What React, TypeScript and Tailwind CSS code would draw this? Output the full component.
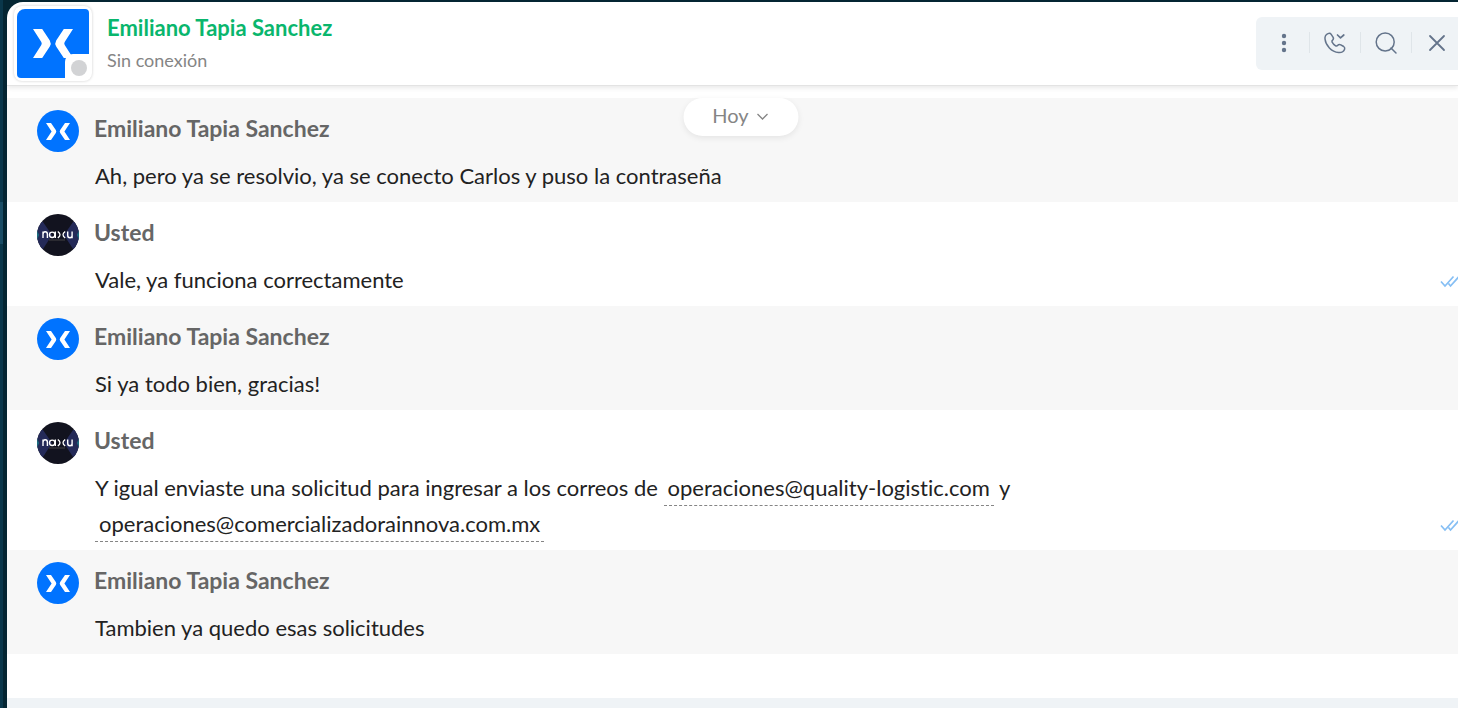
import type { ReactNode } from "react";

type Message = { id: number; author: string; own: boolean; read?: boolean; body: ReactNode };

function MailLink({ address }: { address: string }) {
  return (
    <a
      href={`mailto:${address}`}
      className="inline-block border-b border-dashed border-[#858585] px-1 pb-px leading-8"
    >
      {address}
    </a>
  );
}

const messages: Message[] = [
  {
    id: 1,
    author: "Emiliano Tapia Sanchez",
    own: false,
    body: "Ah, pero ya se resolvio, ya se conecto Carlos y puso la contraseña",
  },
  { id: 2, author: "Usted", own: true, read: true, body: "Vale, ya funciona correctamente" },
  { id: 3, author: "Emiliano Tapia Sanchez", own: false, body: "Si ya todo bien, gracias!" },
  {
    id: 4,
    author: "Usted",
    own: true,
    read: true,
    body: (
      <>
        Y igual enviaste una solicitud para ingresar a los correos de{" "}
        <MailLink address="operaciones@quality-logistic.com" /> y
        <br />
        <MailLink address="operaciones@comercializadorainnova.com.mx" />
      </>
    ),
  },
  { id: 5, author: "Emiliano Tapia Sanchez", own: false, body: "Tambien ya quedo esas solicitudes" },
];

function ContactMark() {
  return (
    <svg viewBox="0 0 40 29" className="h-[29px] w-10" fill="#fff" aria-hidden="true">
      <path d="M0 0H9.2L16.8 11.5Q18.6 14.5 16.8 17.5L9.2 29H0L8.3 16Q9.2 14.5 8.3 13Z" />
      <path d="M40 0H30.8L23.2 11.5Q21.4 14.5 23.2 17.5L30.8 29H40L31.7 16Q30.8 14.5 31.7 13Z" />
    </svg>
  );
}

function SmallContactMark() {
  return (
    <svg viewBox="0 0 24 17" className="h-[17px] w-6" fill="#fff" aria-hidden="true">
      <path d="M0 0H5L9.8 7Q10.8 8.5 9.8 10L5 17H0L5.6 8.5Z" />
      <path d="M24 0H19L14.2 7Q13.2 8.5 14.2 10L19 17H24L18.4 8.5Z" />
    </svg>
  );
}

function Avatar({ own }: { own: boolean }) {
  if (own) {
    return (
      <svg viewBox="0 0 42 42" className="size-[42px] shrink-0 rounded-full" role="img" aria-label="Usted">
        <rect width="42" height="42" fill="#12131f" />
        <path d="M0 8L6 8L15 21L6 35L0 35Z" fill="#242a58" />
        <path d="M42 8L36 8L27 21L36 35L42 35Z" fill="#242a58" />
        <path d="M0 16L2 21L0 26Z" fill="#1c7182" />
        <path d="M42 16L40 21L42 26Z" fill="#1c7182" />
        <g fill="none" stroke="#fff" strokeWidth="1.4">
          <path d="M6 24V17.5M6 20.3Q6 17.7 8.2 17.7T10.4 20.3V24" />
          <circle cx="15.2" cy="20.8" r="2.7" />
          <path d="M18.3 17.5V24" />
          <path d="M20.8 17.5Q25.2 20.8 20.8 24M28.2 17.5Q23.8 20.8 28.2 24" strokeWidth="1.3" />
          <path d="M30.7 17.5V21.2Q30.7 23.7 32.9 23.7T35.1 21.2M35.1 17.5V24.3" />
        </g>
        <path d="M12 26H28" stroke="#77736b" strokeWidth="0.5" />
      </svg>
    );
  }
  return (
    <span className="flex size-[42px] shrink-0 items-center justify-center rounded-full bg-[#0073ff]">
      <SmallContactMark />
    </span>
  );
}

function ReadMark() {
  return (
    <svg
      viewBox="0 0 22 13"
      className="-mr-1 h-[13px] w-[22px] shrink-0"
      fill="none"
      stroke="#86bff4"
      strokeWidth="1.7"
      role="img"
      aria-label="Leído"
    >
      <path d="M1 6.5L5 11L13.5 1.5M8.5 8.5L10.5 11L19 1.5" />
    </svg>
  );
}

const actions: { label: string; icon: ReactNode }[] = [
  {
    label: "Más opciones",
    icon: (
      <g fill="#64748b" stroke="none">
        <circle cx="12" cy="5" r="2.2" />
        <circle cx="12" cy="12" r="2.2" />
        <circle cx="12" cy="19" r="2.2" />
      </g>
    ),
  },
  {
    label: "Llamar",
    icon: (
      <>
        <path d="M5 2.6C3 3.5 1.7 5.4 2 8C2.7 14.5 8.5 20.8 15.5 21.5C18.3 21.8 20.8 20.2 21.6 18.2C22 17.2 21.6 16.2 20.7 15.5L17.8 13.8C16.7 13.2 15.6 13.4 14.8 14.3C14.1 15.1 13.2 15.2 12.3 14.6C10.9 13.7 9.8 12.5 9.1 11.2C8.7 10.3 8.9 9.6 9.6 9.1C10.6 8.3 10.7 7.3 10 6.2L8.2 3.4C7.5 2.3 6.2 2.1 5 2.6Z" />
        <path d="M14.5 4L17.5 6.8L20.8 4" strokeWidth="1.7" />
      </>
    ),
  },
  {
    label: "Buscar",
    icon: (
      <>
        <circle cx="11.2" cy="11" r="9" />
        <path d="M17 17L22 22" />
      </>
    ),
  },
  { label: "Cerrar", icon: <path d="M4 5L18 19M18 5L4 19" strokeWidth="1.8" /> },
];

export default function App() {
  return (
    <div className="flex min-h-screen overflow-hidden bg-[#042532] font-['Lato',sans-serif] [font-variant-ligatures:none]">
      <aside className="w-[7px] shrink-0 border-r-4 border-[#042532] bg-[#0a374b] pt-[202px]">
        <div className="h-[42px] bg-[#194c65]" />
      </aside>

      <main className="mt-[2px] flex min-w-0 flex-1 flex-col overflow-hidden rounded-tl-2xl bg-white">
        <header className="relative z-10 flex items-center justify-between border-b border-[#e3e3e3] py-1 shadow-[0_2px_5px_rgba(0,0,0,0.09)]">
          <div className="flex items-center">
            <div className="relative ml-[7px] h-[75px] w-[78px] rounded-lg bg-white p-[3px] shadow-[0_0_3px_rgba(0,0,0,0.2)]">
              <div className="flex h-full items-center justify-center rounded rounded-tl-lg bg-[#0073ff]">
                <ContactMark />
              </div>
              <span className="absolute right-[3px] bottom-[3px] flex size-6 items-center justify-center rounded-tl-lg bg-white pt-1 pl-1">
                <span className="size-4 rounded-full bg-[#d2d3d5]" />
              </span>
            </div>
            <div className="ml-[15px]">
              <h1 className="text-[22px] leading-8 font-bold text-[#09b66d]">Emiliano Tapia Sanchez</h1>
              <p className="text-lg leading-8 text-[#858585]">Sin conexión</p>
            </div>
          </div>
          <nav className="-mr-[6px] flex rounded-md bg-[#eff3f6] pt-[15px] pr-px pb-[17px] pl-[3px]" aria-label="Acciones del chat">
            {actions.map((action, index) => (
              <button
                key={action.label}
                type="button"
                aria-label={action.label}
                className={`flex h-[21px] w-[51px] items-center justify-center ${
                  index < actions.length - 1 ? "border-r border-[#dfe5e9]" : ""
                }`}
              >
                <svg
                  viewBox="0 0 24 24"
                  className="size-6 shrink-0"
                  fill="none"
                  stroke="#64748b"
                  strokeWidth="1.5"
                  strokeLinecap="round"
                  strokeLinejoin="round"
                  aria-hidden="true"
                >
                  {action.icon}
                </svg>
              </button>
            ))}
          </nav>
        </header>

        <section className="relative flex-1 pt-3" aria-label="Mensajes">
          <button
            type="button"
            className="absolute top-3 left-1/2 z-10 ml-2 flex h-[38px] w-[115px] -translate-x-1/2 items-center justify-center gap-2 rounded-full bg-white pb-1 text-xl text-[#858585] shadow-[0_2px_6px_rgba(0,0,0,0.08)]"
          >
            Hoy
            <svg viewBox="0 0 12 8" className="mt-1 h-2 w-3" fill="none" stroke="#858585" strokeWidth="1.3" aria-hidden="true">
              <path d="M1 1L6 6L11 1" />
            </svg>
          </button>
          {messages.map((message) => (
            <article
              key={message.id}
              className={`flex gap-[15px] pt-3 pb-2 pl-[30px] ${message.own ? "bg-white" : "bg-[#f7f7f7]"}`}
            >
              <Avatar own={message.own} />
              <div className="min-w-0 flex-1">
                <h2 className="pb-3 text-[23px] leading-9 font-bold text-[#666]">{message.author}</h2>
                <div className="flex items-end">
                  <p className="flex-1 pl-px text-[22px] leading-9 text-[#222]">{message.body}</p>
                  {message.read && (
                    <div className="flex h-9 items-center pt-[2px]">
                      <ReadMark />
                    </div>
                  )}
                </div>
              </div>
            </article>
          ))}
        </section>

        <footer className="h-[10px] bg-[#eff3f6]" />
      </main>
    </div>
  );
}
